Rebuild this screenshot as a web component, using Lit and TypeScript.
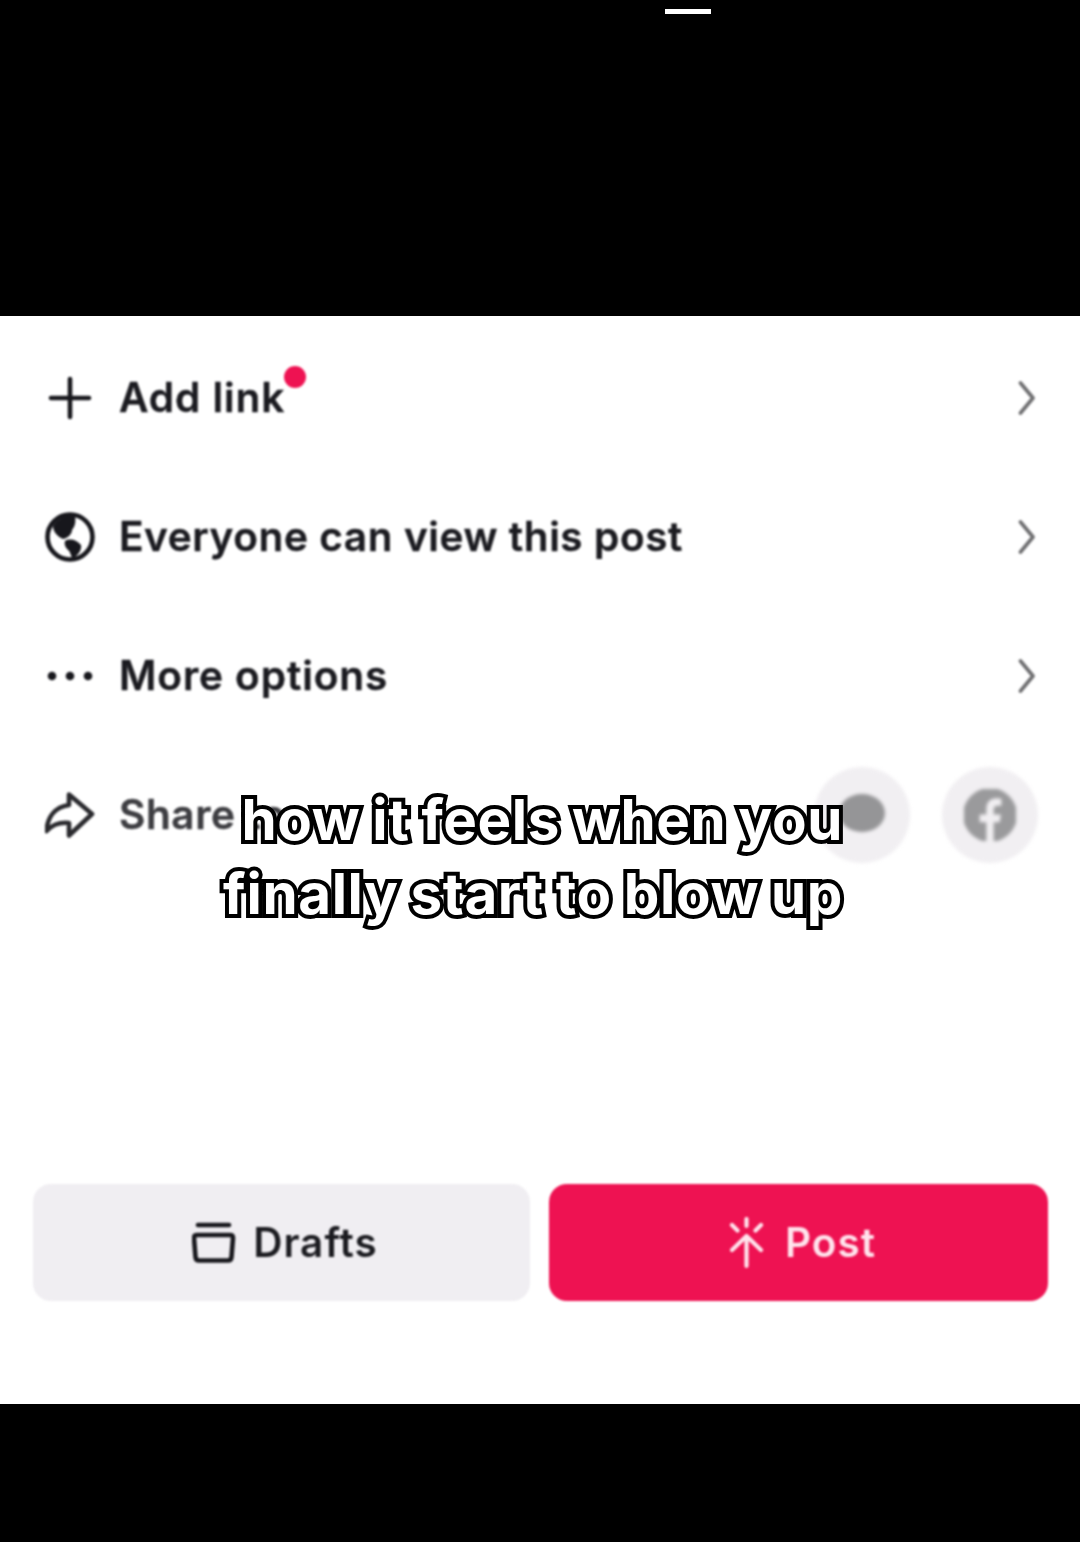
import { LitElement, html, css, svg } from "lit";
import { customElement } from "lit/decorators.js";

const chevron = html`<svg class="chev" viewBox="0 0 20 36"><path d="M4.500 3 L17 18 L4.500 33" fill="none" stroke="#707072" stroke-width="3.800" stroke-linecap="round" stroke-linejoin="round"/></svg>`;

const plus = svg`<path d="M25 6V44M6 25H44" fill="none" stroke="#17171c" stroke-width="4.600" stroke-linecap="round"/>`;
const globe = svg`<circle cx="25" cy="25" r="22.500" fill="none" stroke="#17171c" stroke-width="4.600"/>
<path d="M8 14C13 6 23 2 30 4C31 10 30 14 27 18C27 22 23 26 18 27C13 25 8 20 8 14Z" fill="#17171c"/>
<path d="M20 29C25 26 32 28 36 33C37 37 34 43 28 46C25 44 26 40 23 38C20 35 19 32 20 29Z" fill="#17171c"/>`;
const dots = svg`<circle cx="7" cy="25" r="4.300" fill="#17171c"/><circle cx="25" cy="25" r="4.300" fill="#17171c"/><circle cx="43" cy="25" r="4.300" fill="#17171c"/>`;
const share = svg`<path d="M24 4.500 L47 24 L24 45.500 L24 33 C14 32 7 35 1.500 41 C2.500 27 10 17 24 15 Z" fill="none" stroke="#2a2a2e" stroke-width="4.600" stroke-linejoin="round"/>`;
const drafts = svg`<path d="M6 3H37" stroke="#17171c" stroke-width="4.600" stroke-linecap="round" fill="none"/>
<path d="M5 13H38C40 13 41 14 41 16L39.500 35C39.300 37 38 38.500 36 38.500H7C5 38.500 3.700 37 3.500 35L2 16C2 14 3 13 5 13Z" fill="none" stroke="#17171c" stroke-width="4.600" stroke-linejoin="round"/>`;
const post = svg`<g fill="none" stroke="#ffe3ec" stroke-width="4.200" stroke-linecap="round" stroke-linejoin="round">
<path d="M18.500 19V49M4 33L18.500 19L33 33"/><path d="M18.500 2V9M4 8L9.500 13.500M33 8L27.500 13.500"/></g>`;
const facebook = svg`<circle cx="25" cy="25" r="26" fill="#9a9a9c"/><path d="M21.500 52V32H15V24.500H21.500V19C21.500 12.500 25.500 9 31 9C33 9 35 9.300 36 9.500V16H32.500C29.500 16 28.500 17.800 28.500 20V24.500H35.500L34.300 32H28.500V52Z" fill="#f1eff2"/>`;

@customElement("app-root")
export class AppRoot extends LitElement {
  static styles = css`
    :host { display: block; width: 1080px; height: 1542px; position: relative; overflow: hidden; background: #000; font-family: Inter, "Liberation Sans", sans-serif; }
    .page { display: flex; flex-direction: column; height: 1542px; }
    .top { height: 316px; flex: none; background: #000; }
    .panel { flex: 1; background: #fff; display: flex; min-height: 0; }
    .content { flex: 1; display: flex; flex-direction: column; padding-top: 12px; box-sizing: border-box; filter: blur(0.9px); }
    .bottom { height: 138px; flex: none; background: #000; }
    .row { height: 139px; flex: none; display: flex; align-items: center; padding: 0 45px; gap: 24px; box-sizing: border-box; }
    .icon { width: 50px; height: 50px; flex: none; display: block; }
    .label { position: relative; font-size: 40.500px; font-weight: 600; color: #1b1b20; line-height: 50px; letter-spacing: 0.600px; -webkit-text-stroke: 0.4px currentColor; }
    .wide { letter-spacing: 0.950px; }
    .spacer { flex: 1; }
    .chev { width: 20px; height: 36px; flex: none; display: block; margin-right: -1px; }
    .muted { color: #3e3e42; }
    .badge { position: absolute; width: 22px; height: 22px; left: 165px; top: -7px; border-radius: 50%; background: #ee1252; }
    .socials { display: flex; gap: 32px; margin-right: -3px; }
    .soc { width: 96px; height: 96px; border-radius: 50%; background: #f1eff2; display: flex; align-items: center; justify-content: center; filter: blur(1.500px); }
    .soc svg { width: 52px; height: 52px; display: block; }
    .blob { width: 46px; height: 38px; border-radius: 50%; background: #959597; margin-top: -4px; }
    .footer { display: flex; gap: 19px; padding: 0 32px 103px 33px; }
    .btn { height: 117px; box-sizing: border-box; padding-left: 7px; border-radius: 18px; display: flex; align-items: center; justify-content: center; font-size: 40.500px; font-weight: 600; letter-spacing: 1px; }
    .drafts { width: 497px; flex: none; background: #f0eef2; color: #1b1b20; gap: 17px; }
    .drafts svg { width: 44px; height: 42px; }
    .post { flex: 1; background: #ee1252; color: #ffe3ec; gap: 19px; }
    .post svg { width: 38px; height: 52px; }
    .bar { position: absolute; left: 665px; top: 9px; width: 46px; height: 5px; background: #fff; }
    .caption { position: absolute; right: 237px; top: 783px; text-align: right; font-family: Inter, "Liberation Sans", sans-serif; font-size: 56.500px; font-weight: 700; line-height: 74px; letter-spacing: 0.600px; word-spacing: -2px; color: #fff; -webkit-text-stroke: 8px #000; paint-order: stroke fill; white-space: nowrap; }
  `;

  render() {
    return html`
      <div class="page">
        <div class="top"></div>
        <div class="panel">
          <div class="content">
            <div class="row">
              <svg class="icon" viewBox="0 0 50 50">${plus}</svg>
              <span class="label wide">Add link<i class="badge"></i></span>
              <span class="spacer"></span>${chevron}
            </div>
            <div class="row">
              <svg class="icon" viewBox="0 0 50 50">${globe}</svg>
              <span class="label">Everyone can view this post</span>
              <span class="spacer"></span>${chevron}
            </div>
            <div class="row">
              <svg class="icon" viewBox="0 0 50 50">${dots}</svg>
              <span class="label wide">More options</span>
              <span class="spacer"></span>${chevron}
            </div>
            <div class="row">
              <svg class="icon" viewBox="0 0 50 50">${share}</svg>
              <span class="label muted">Share to</span>
              <span class="spacer"></span>
              <div class="socials">
                <div class="soc"><div class="blob"></div></div>
                <div class="soc"><svg viewBox="0 0 50 50">${facebook}</svg></div>
              </div>
            </div>
            <div class="spacer"></div>
            <div class="footer">
              <div class="btn drafts"><svg viewBox="0 0 44 42">${drafts}</svg>Drafts</div>
              <div class="btn post"><svg viewBox="0 0 38 52">${post}</svg>Post</div>
            </div>
          </div>
        </div>
        <div class="bottom"></div>
      </div>
      <div class="bar"></div>
      <div class="caption">how it feels when you<br />finally start to blow up</div>
    `;
  }
}
